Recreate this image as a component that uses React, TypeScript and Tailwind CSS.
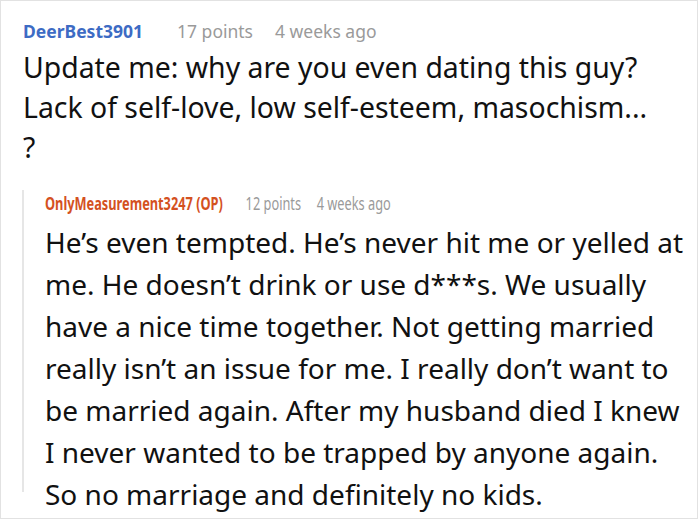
import React from "react";

const font = { fontFamily: '"Noto Sans", "Open Sans", sans-serif' };

const question = [
  "Update me: why are you even dating this guy?",
  "Lack of self-love, low self-esteem, masochism...",
  "?",
];

const answer = [
  "He’s even tempted. He’s never hit me or yelled at",
  "me. He doesn’t drink or use d***s. We usually",
  "have a nice time together. Not getting married",
  "really isn’t an issue for me. I really don’t want to",
  "be married again. After my husband died I knew",
  "I never wanted to be trapped by anyone again.",
  "So no marriage and definitely no kids.",
];

export default function App() {
  return (
    <main className="w-[698px] h-[519px] border border-[#e2e2e2] bg-white overflow-hidden" style={font}>
      <div className="pl-[22px] pt-[17px]">
        <div className="flex items-baseline text-[17.5px] leading-[26px] whitespace-nowrap">
          <span className="font-bold text-[#3d6bc4]">DeerBest3901</span>
          <span className="ml-[34px] text-[#9a9a9a]">17 points</span>
          <span className="ml-[22px] text-[#9a9a9a]">4 weeks ago</span>
        </div>
        <div className="mt-[3px] text-[28.4px] leading-[40px] text-[#111] whitespace-nowrap">
          {question.map((l, i) => (
            <div key={i}>{l}</div>
          ))}
        </div>
      </div>
      <div className="ml-[21px] mt-[34px] h-[302px] border-l-2 border-[#e6e6e6] pl-[21px]">
        <div className="-mt-[11px] flex items-baseline text-[18px] leading-[26px] whitespace-nowrap origin-left scale-x-[0.71]">
          <span className="font-bold text-[#d4511f]">OnlyMeasurement3247 (OP)</span>
          <span className="ml-[32px] text-[#9a9a9a]">12 points</span>
          <span className="ml-[22px] text-[#9a9a9a]">4 weeks ago</span>
        </div>
        <div className="mt-[5px] text-[28px] leading-[42px] text-[#111] whitespace-nowrap">
          {answer.map((l, i) => (
            <div key={i}>{l}</div>
          ))}
        </div>
      </div>
    </main>
  );
}
